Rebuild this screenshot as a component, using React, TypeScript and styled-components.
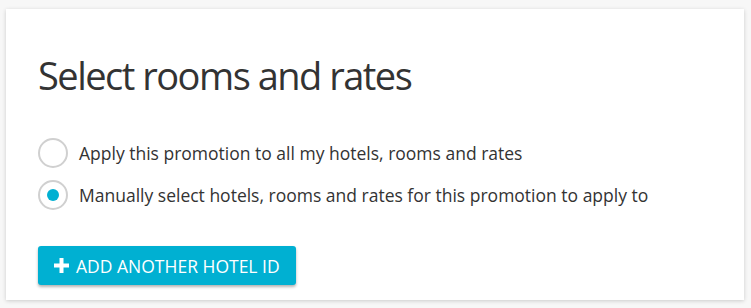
import styled, { createGlobalStyle } from "styled-components";

const GlobalStyle = createGlobalStyle`
  html, body {
    margin: 0;
    padding: 0;
    background: #f7f7f7;
  }
  body {
    font-family: "Open Sans", "Liberation Sans", sans-serif;
    color: #333333;
  }
`;

const Page = styled.div`
  padding: 9px 7px 8px 6px;
`;

const Card = styled.section`
  background: #ffffff;
  box-shadow: 0 1px 4px rgba(0, 0, 0, 0.18);
  padding: 42px 32px 15px 32px;
  height: 291px;
  box-sizing: border-box;
`;

const Title = styled.h2`
  margin: 0 0 39px 0;
  font-size: 38px;
  font-weight: 400;
  color: #333333;
  letter-spacing: -1.5px;
  line-height: 48px;
`;

const Options = styled.div`
  display: flex;
  flex-direction: column;
  gap: 12px;
  margin-bottom: 36px;
`;

const Option = styled.label`
  display: flex;
  align-items: center;
  gap: 11px;
  font-size: 17.5px;
  line-height: 30px;
  color: #333333;
  cursor: pointer;
`;

const Radio = styled.span<{ $checked?: boolean }>`
  width: 26px;
  height: 26px;
  border-radius: 50%;
  border: 2px solid #d0d0d0;
  background: #ffffff;
  display: flex;
  align-items: center;
  justify-content: center;
  flex-shrink: 0;

  &::after {
    content: "";
    width: 12px;
    height: 12px;
    border-radius: 50%;
    background: ${(p) => (p.$checked ? "#00b0d2" : "transparent")};
  }
`;

const AddButton = styled.button`
  display: inline-flex;
  align-items: center;
  gap: 7px;
  height: 39px;
  padding: 0 16px;
  border: none;
  border-radius: 3px;
  background: #00b0d2;
  color: #ffffff;
  font-family: "Open Sans", "Liberation Sans", sans-serif;
  font-size: 17.5px;
  font-weight: 400;
  box-shadow: 0 2px 3px rgba(0, 0, 0, 0.3);
  cursor: pointer;
`;

function PlusIcon() {
  return (
    <svg width="15" height="15" viewBox="0 0 15 15">
      <path d="M5.5 0h4v5.5H15v4H9.5V15h-4V9.5H0v-4h5.5z" fill="#ffffff" />
    </svg>
  );
}

export default function App() {
  return (
    <>
      <GlobalStyle />
      <Page>
        <Card>
          <Title>Select rooms and rates</Title>
          <Options>
            <Option>
              <Radio />
              Apply this promotion to all my hotels, rooms and rates
            </Option>
            <Option>
              <Radio $checked />
              Manually select hotels, rooms and rates for this promotion to apply to
            </Option>
          </Options>
          <AddButton>
            <PlusIcon />
            ADD ANOTHER HOTEL ID
          </AddButton>
        </Card>
      </Page>
    </>
  );
}
